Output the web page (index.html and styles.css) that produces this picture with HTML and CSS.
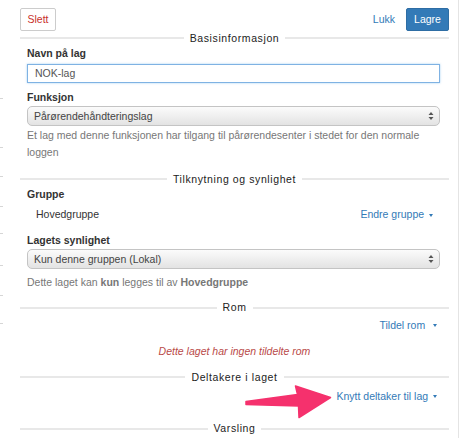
FILE: index.html
```html
<!DOCTYPE html>
<html lang="no">
<head>
<meta charset="utf-8">
<title>Lag</title>
<link rel="stylesheet" href="styles.css">
</head>
<body>
<div class="page">
  <div class="edge-ticks">
    <span style="top:98px"></span><span style="top:147px"></span><span style="top:176px"></span><span style="top:206px"></span><span style="top:233px"></span><span style="top:265px"></span><span style="top:295px"></span><span style="top:323px"></span>
  </div>
  <div class="panel">
    <div class="toolbar">
      <button class="btn btn-danger-outline">Slett</button>
      <div class="toolbar-right">
        <a class="link">Lukk</a>
        <button class="btn btn-primary">Lagre</button>
      </div>
    </div>

    <div class="divider"><span>Basisinformasjon</span></div>
    <div class="group">
      <label class="label">Navn på lag</label>
      <div class="input">NOK-lag</div>
    </div>
    <div class="group g-func">
      <label class="label label-sel">Funksjon</label>
      <div class="select"><span>Pårørendehåndteringslag</span><svg class="updown" width="6" height="10" viewBox="0 0 6 10"><path d="M3 1 L5.5 4 L0.5 4 Z M3 9 L5.5 6 L0.5 6 Z" fill="#555"/></svg></div>
      <p class="help">Et lag med denne funksjonen har tilgang til pårørendesenter i stedet for den normale loggen</p>
    </div>

    <div class="divider d2"><span>Tilknytning og synlighet</span></div>
    <div class="group">
      <label class="label">Gruppe</label>
      <div class="row">
        <span class="static">Hovedgruppe</span>
        <a class="link">Endre gruppe <i class="caret"></i></a>
      </div>
    </div>
    <div class="group g-vis">
      <label class="label label-sel">Lagets synlighet</label>
      <div class="select"><span>Kun denne gruppen (Lokal)</span><svg class="updown" width="6" height="10" viewBox="0 0 6 10"><path d="M3 1 L5.5 4 L0.5 4 Z M3 9 L5.5 6 L0.5 6 Z" fill="#555"/></svg></div>
      <p class="help help-vis">Dette laget kan <b>kun</b> legges til av <b>Hovedgruppe</b></p>
    </div>

    <div class="divider d3"><span>Rom</span></div>
    <div class="row row-right r-rom">
      <a class="link">Tildel rom &nbsp;<i class="caret"></i></a>
    </div>
    <p class="empty">Dette laget har ingen tildelte rom</p>

    <div class="divider d4"><span>Deltakere i laget</span></div>
    <div class="row row-right r-delt">
      <a class="link">Knytt deltaker til lag <i class="caret"></i></a>
    </div>

    <div class="divider d5"><span>Varsling</span></div>
  </div>

  <svg class="arrow" width="462" height="438" viewBox="0 0 462 438">
    <path d="M246 401.5 L297.5 394.5 L295.5 386 L330.5 397.5 L299 417.5 L298.5 406 L246 404.5 Z" fill="#f5316d" stroke="#f5316d" stroke-width="1.5" stroke-linejoin="round"/>
  </svg>
</div>
</body>
</html>
```
FILE: styles.css
```css
* { box-sizing: border-box; }
html, body { margin: 0; padding: 0; background: #fff; }
body {
  font-family: "Liberation Sans", Arial, Helvetica, sans-serif;
  font-size: 10.5px;
  line-height: 15px;
  color: #333;
}
.page {
  position: relative;
  width: 462px;
  height: 438px;
  overflow: hidden;
}
.page::after {
  content: "";
  position: absolute;
  top: 0;
  bottom: 0;
  left: 458px;
  width: 1px;
  background: #e4e4e4;
}
.edge-ticks span {
  position: absolute;
  left: 0;
  width: 3px;
  height: 1px;
  background: #d6d6d6;
}
.panel {
  margin-left: 20px;
  width: 429px;
  padding-top: 8px;
}
.toolbar {
  display: flex;
  justify-content: space-between;
  align-items: center;
  height: 23px;
}
.toolbar-right {
  display: flex;
  align-items: center;
  gap: 11px;
}
.btn {
  font-family: inherit;
  font-size: 10.5px;
  line-height: 15px;
  height: 23px;
  padding: 3px 0;
  border-radius: 2px;
  border: 1px solid #ccc;
  background: #fff;
  margin: 0;
}
.btn-danger-outline { color: #c9302c; width: 36px; }
.btn-primary {
  color: #fff;
  background: #337ab7;
  border-color: #2e6da4;
  width: 43px;
}
.link {
  color: #337ab7;
  text-decoration: none;
}
.divider {
  display: flex;
  align-items: center;
  gap: 6px;
  height: 14px;
  color: #222;
  letter-spacing: 0.6px;
}
.divider::before, .divider::after {
  content: "";
  flex: 1;
  height: 2px;
  background: #e8e8e8;
}
.group {
  padding: 0 9px 0 7px;
}
.label {
  display: block;
  font-weight: bold;
  color: #333;
  margin-top: 1px;
  margin-bottom: 3px;
}
.label-sel { margin-bottom: 1px; }
.input {
  height: 19px;
  border: 1px solid #7fb2e3;
  box-shadow: 0 0 2px rgba(102, 175, 233, 0.6);
  padding: 1px 7px;
  line-height: 15px;
  color: #555;
}
.g-func { margin-top: 7px; }
.select {
  display: flex;
  justify-content: space-between;
  align-items: center;
  height: 20px;
  border: 1px solid #c4c4c4;
  border-radius: 5px;
  background: linear-gradient(#fbfbfb, #e3e3e3);
  padding: 0 5px 0 6px;
  color: #444;
}
.updown { display: block; }
.help {
  margin: 1px 0 0 0;
  color: #777;
  line-height: 17px;
}
.help-vis { margin-top: 5px; }
.d2 { margin-top: 11px; }
.row {
  display: flex;
  justify-content: space-between;
  align-items: center;
  margin-top: 5px;
}
.static { padding-left: 9px; color: #333; }
.group .row { margin-right: -9px; padding-right: 16px; }
.caret {
  display: inline-block;
  width: 0;
  height: 0;
  border-left: 2.5px solid transparent;
  border-right: 2.5px solid transparent;
  border-top: 3px solid #337ab7;
  vertical-align: middle;
  margin-left: 2px;
}
.g-vis { margin-top: 11px; }
.d3 { margin-top: 9.5px; }
.row-right { justify-content: flex-end; padding-right: 12px; }
.r-rom { margin-top: 3px; }
.empty {
  margin: 11.5px 0 0 0;
  text-align: center;
  font-style: italic;
  color: #b94a48;
}
.d4 { margin-top: 11px; }
.r-delt { margin-top: 4.5px; }
.d5 { margin-top: 18px; }
.arrow {
  position: absolute;
  left: 0;
  top: 0;
  pointer-events: none;
}
```
